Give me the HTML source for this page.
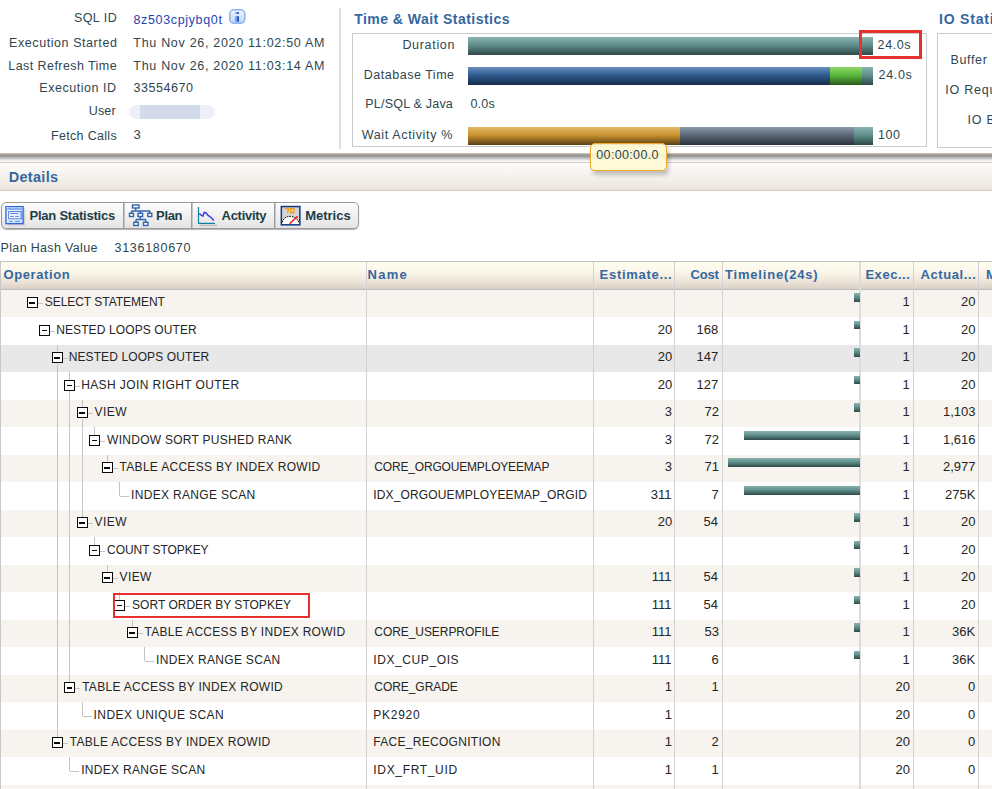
<!DOCTYPE html>
<html><head><meta charset="utf-8"><style>
html,body{margin:0;padding:0;width:992px;height:789px;overflow:hidden;background:#fff;}
body{position:relative;font-family:"Liberation Sans",sans-serif;}
.t{position:absolute;white-space:nowrap;}
.b{position:absolute;}
</style></head><body>
<div class="t" style="left:73.90px;top:11.00px;font-size:12.5px;line-height:15.00px;color:#2e464f;letter-spacing:0.460px;">SQL ID</div>
<div class="t" style="left:9.10px;top:36.00px;font-size:12.5px;line-height:15.00px;color:#2e464f;letter-spacing:0.569px;">Execution Started</div>
<div class="t" style="left:8.30px;top:59.00px;font-size:12.5px;line-height:15.00px;color:#2e464f;letter-spacing:0.431px;">Last Refresh Time</div>
<div class="t" style="left:39.30px;top:81.00px;font-size:12.5px;line-height:15.00px;color:#2e464f;letter-spacing:0.536px;">Execution ID</div>
<div class="t" style="left:88.70px;top:104.00px;font-size:12.5px;line-height:15.00px;color:#2e464f;letter-spacing:0.167px;">User</div>
<div class="t" style="left:51.00px;top:129.00px;font-size:12.5px;line-height:15.00px;color:#2e464f;letter-spacing:0.320px;">Fetch Calls</div>
<div class="t" style="left:133.40px;top:13.00px;font-size:12.5px;line-height:15.00px;color:#2444b4;letter-spacing:0.658px;">8z503cpjybq0t</div>
<div class="t" style="left:133.30px;top:36.00px;font-size:12.5px;line-height:15.00px;color:#2e464f;letter-spacing:0.704px;">Thu Nov 26, 2020 11:02:50 AM</div>
<div class="t" style="left:133.30px;top:59.00px;font-size:12.5px;line-height:15.00px;color:#2e464f;letter-spacing:0.704px;">Thu Nov 26, 2020 11:03:14 AM</div>
<div class="t" style="left:133.50px;top:81.00px;font-size:12.5px;line-height:15.00px;color:#2e464f;letter-spacing:0.557px;">33554670</div>
<div class="t" style="left:133.50px;top:127.00px;font-size:13px;line-height:15.60px;color:#2e464f;">3</div>
<svg class="b" style="left:229px;top:9px" width="17" height="15" viewBox="0 0 17 15">
<defs><linearGradient id="ig" x1="0" y1="0" x2="0" y2="1"><stop offset="0" stop-color="#f2f7ff"/><stop offset="1" stop-color="#bcd4f6"/></linearGradient></defs>
<rect x="0.75" y="0.75" width="15" height="13.5" rx="4" fill="url(#ig)" stroke="#8eb2ee" stroke-width="1.5"/>
<rect x="6.1" y="3.1" width="2" height="1.8" fill="#6f9ef2"/><rect x="8.1" y="3.1" width="1.9" height="1.8" fill="#2a52b4"/><rect x="6.1" y="7.2" width="2" height="5.6" fill="#6f9ef2"/><rect x="8.1" y="7.2" width="1.9" height="5.6" fill="#2a52b4"/>
</svg>
<div class="b" style="left:129px;top:105px;width:86px;height:14px;border-radius:7px;background:#eef0f7;filter:blur(0.6px)"></div>
<div class="b" style="left:140px;top:105px;width:60px;height:14px;background:#d3dbeb;filter:blur(0.5px)"></div>
<div class="b" style="left:339px;top:8px;width:2px;height:141px;background:#dde0e0"></div>
<div class="t" style="left:354.20px;top:11.00px;font-size:14px;line-height:16.80px;color:#35689f;font-weight:bold;letter-spacing:0.467px;">Time &amp; Wait Statistics</div>
<div class="b" style="left:352px;top:33px;width:575px;height:114px;border:1px solid #c9cccc;box-sizing:border-box;"></div>
<div class="b" style="left:468px;top:37px;width:405px;height:18px;background:linear-gradient(to bottom,#8ab3b0 0%,#5f8f8c 45%,#2e4846 100%)"></div>
<div class="b" style="left:468px;top:67px;width:362px;height:18px;background:linear-gradient(to bottom,#6b8fbf 0%,#2f5a8f 45%,#172c48 100%)"></div>
<div class="b" style="left:830px;top:67px;width:32px;height:18px;background:linear-gradient(to bottom,#8ed86a 0%,#58b83a 45%,#2d5a1e 100%)"></div>
<div class="b" style="left:862px;top:67px;width:11px;height:18px;background:linear-gradient(to bottom,#8ab3b0 0%,#5f8f8c 45%,#2e4846 100%)"></div>
<div class="b" style="left:468px;top:127px;width:212px;height:18px;background:linear-gradient(to bottom,#e2b866 0%,#c9922e 45%,#5a4018 100%)"></div>
<div class="b" style="left:680px;top:127px;width:174px;height:18px;background:linear-gradient(to bottom,#8a98a8 0%,#5c6878 45%,#2c323c 100%)"></div>
<div class="b" style="left:854px;top:127px;width:19px;height:18px;background:linear-gradient(to bottom,#8ab3b0 0%,#5f8f8c 45%,#2e4846 100%)"></div>
<div class="t" style="left:402.40px;top:38.00px;font-size:12.5px;line-height:15.00px;color:#2e464f;letter-spacing:0.686px;">Duration</div>
<div class="t" style="left:363.70px;top:68.00px;font-size:12.5px;line-height:15.00px;color:#2e464f;letter-spacing:0.525px;">Database Time</div>
<div class="t" style="left:365.30px;top:97.00px;font-size:12.5px;line-height:15.00px;color:#2e464f;letter-spacing:0.208px;">PL/SQL &amp; Java</div>
<div class="t" style="left:361.70px;top:128.00px;font-size:12.5px;line-height:15.00px;color:#2e464f;letter-spacing:0.650px;">Wait Activity %</div>
<div class="t" style="left:470.50px;top:97.00px;font-size:12.5px;line-height:15.00px;color:#2e464f;letter-spacing:0.167px;">0.0s</div>
<div class="t" style="left:877.60px;top:38.00px;font-size:12.5px;line-height:15.00px;color:#2e464f;letter-spacing:0.600px;">24.0s</div>
<div class="t" style="left:878.60px;top:68.00px;font-size:12.5px;line-height:15.00px;color:#2e464f;letter-spacing:0.650px;">24.0s</div>
<div class="t" style="left:878.00px;top:128.00px;font-size:12.5px;line-height:15.00px;color:#2e464f;letter-spacing:0.550px;">100</div>
<div class="b" style="left:859px;top:30px;width:63px;height:29px;border:3px solid #e8312f;box-sizing:border-box"></div>
<div class="t" style="left:939.00px;top:11.00px;font-size:14px;line-height:16.80px;color:#35689f;font-weight:bold;letter-spacing:0.802px;">IO Statistics</div>
<div class="b" style="left:937px;top:33px;width:80px;height:115px;border:1px solid #c9cccc;box-sizing:border-box;"></div>
<div class="t" style="left:950.40px;top:53.00px;font-size:12.5px;line-height:15.00px;color:#2e464f;letter-spacing:0.665px;">Buffer Gets</div>
<div class="t" style="left:945.20px;top:83.00px;font-size:12.5px;line-height:15.00px;color:#2e464f;letter-spacing:0.772px;">IO Requests</div>
<div class="t" style="left:967.50px;top:113.00px;font-size:12.5px;line-height:15.00px;color:#2e464f;letter-spacing:0.748px;">IO Bytes</div>
<div class="b" style="left:0px;top:153px;width:992px;height:9px;background:linear-gradient(to bottom,#dccfc2 0px,#b5aea8 1px,#959595 2px,#959595 3px,#aaaaaa 4px,#cfcfcf 6px,#e9e9e9 7px,#f4f4f4 8px,#ffffff 9px)"></div>
<div class="b" style="left:0px;top:162px;width:992px;height:29px;border-top:1px solid #d8cabb;border-bottom:1px solid #d8cabb;box-sizing:border-box;background:linear-gradient(to bottom,#fefdfb,#ebe5de)"></div>
<div class="t" style="left:8.70px;top:169.00px;font-size:14.5px;line-height:17.40px;color:#35689f;font-weight:bold;letter-spacing:0.300px;">Details</div>
<div class="b" style="left:590px;top:143px;width:77px;height:28px;box-sizing:border-box;border:1.5px solid #f0a828;border-radius:5px;background:rgba(255,251,212,0.9);box-shadow:2px 4px 4px rgba(0,0,0,0.22)"></div>
<div class="t" style="left:596.30px;top:148.00px;font-size:12.5px;line-height:15.00px;color:#2e464f;letter-spacing:0.344px;">00:00:00.0</div>
<div class="b" style="left:1px;top:202px;width:358px;height:27px;box-sizing:border-box;border:1px solid #9a9a9a;border-radius:5px;background:linear-gradient(to bottom,#fdfdfd,#e4e4e4);box-shadow:0 1px 1px rgba(0,0,0,0.3)"></div>
<div class="b" style="left:123px;top:203px;width:2px;height:25px;background:linear-gradient(to right,#8a8a8a,#d8d8d8)"></div>
<div class="b" style="left:191px;top:203px;width:2px;height:25px;background:linear-gradient(to right,#8a8a8a,#d8d8d8)"></div>
<div class="b" style="left:274px;top:203px;width:2px;height:25px;background:linear-gradient(to right,#8a8a8a,#d8d8d8)"></div>
<div class="t" style="left:29.50px;top:208.00px;font-size:13px;line-height:15.60px;color:#1d3d47;font-weight:bold;letter-spacing:-0.229px;">Plan Statistics</div>
<div class="t" style="left:156.10px;top:208.00px;font-size:13px;line-height:15.60px;color:#1d3d47;font-weight:bold;letter-spacing:-0.333px;">Plan</div>
<div class="t" style="left:221.60px;top:208.00px;font-size:13px;line-height:15.60px;color:#1d3d47;font-weight:bold;letter-spacing:-0.300px;">Activity</div>
<div class="t" style="left:305.30px;top:208.00px;font-size:13px;line-height:15.60px;color:#1d3d47;font-weight:bold;letter-spacing:-0.033px;">Metrics</div>
<svg class="b" style="left:2px;top:202px" width="26" height="26" viewBox="0 0 26 26">
<defs><linearGradient id="psg" x1="0" y1="0" x2="1" y2="1"><stop offset="0" stop-color="#f4faff"/><stop offset="1" stop-color="#c9e2ff"/></linearGradient></defs>
<rect x="5.6" y="6" width="17.6" height="17.6" fill="#b8b0a8" opacity="0.45"/>
<rect x="3.95" y="4.65" width="17.15" height="17" fill="url(#psg)" stroke="#2f62e0" stroke-width="1.3"/>
<rect x="4.6" y="5.3" width="15.8" height="1.8" fill="#a8d0ff"/>
<rect x="5" y="5.5" width="1.2" height="1" fill="#ffffff"/>
<path d="M4.6 7.1H20.4" stroke="#3a6ae0" stroke-width="0.8"/>
<rect x="6.6" y="9.5" width="13.2" height="7.3" fill="#eef6ff" stroke="#5a86e0" stroke-width="1"/>
<rect x="18.3" y="10" width="1.2" height="6.3" fill="#7a9ee8"/>
<path d="M8.2 11.5H16.7M8.2 14.4H11.9M13.1 14.4H16.9M7.1 19.4H10.8M13.1 19.4H17.8" stroke="#4a78d8" stroke-width="0.9"/>
</svg>
<svg class="b" style="left:128px;top:204px" width="25" height="23" viewBox="0 0 25 23">
<g fill="#ffffff" stroke="#2f63ad" stroke-width="1.4">
<rect x="4.5" y="1" width="6.5" height="3"/>
<rect x="1.5" y="9.3" width="4" height="3.2"/><rect x="10" y="9.3" width="4.6" height="3.2"/><rect x="19.8" y="9.3" width="4" height="3.2"/>
<rect x="5.8" y="18.3" width="4.4" height="3.2"/><rect x="15.5" y="18.3" width="4.4" height="3.2"/>
</g>
<path d="M7.7 4v3M3.5 7v2.3M3.5 7h18.2v2.3M12.3 7v2.3M12.3 12.5v3M8 15.5h9.7M8 15.5v2.8M17.7 15.5v2.8" stroke="#2f63ad" stroke-width="1.4" fill="none"/>
</svg>
<svg class="b" style="left:194px;top:203px" width="26" height="26" viewBox="0 0 26 26">
<path d="M5.5 22.3H23" stroke="#9a9590" stroke-width="1.2" opacity="0.6"/>
<path d="M4.5 4V20.4H21" stroke="#137fa8" stroke-width="1.2" fill="none"/>
<path d="M5.3 10.5L6.9 11.9L8.9 13.2L10.2 9.4L12.2 9.9L13.8 12.2L17.1 14.5L19.8 17.5" stroke="#3c3ce6" stroke-width="1.5" fill="none"/>
</svg>
<svg class="b" style="left:277px;top:202px" width="26" height="26" viewBox="0 0 26 26">
<rect x="4.35" y="4.55" width="18.5" height="18.3" fill="#d4d4d4" stroke="#0b3a88" stroke-width="1.5"/>
<path d="M5.3 21.9V20.4C6 16.4 9 14.4 13 14.4C17 14.4 20.5 16.4 21.9 20.4V21.9Z" fill="#ffffff"/>
<path d="M5.3 20.4C6 16.4 9 14.4 13 14.4C17 14.4 20.5 16.4 21.9 20.4" fill="none" stroke="#111" stroke-width="1" stroke-dasharray="1.6 0.9"/>
<path d="M12.5 21.8L20.6 14.4" stroke="#f01818" stroke-width="1.5"/>
<path d="M7.8 6.5H11.6L10.6 10.9" stroke="#f59a10" stroke-width="1.3" fill="none"/>
<rect x="13.6" y="6.5" width="3.3" height="4.2" stroke="#f59a10" stroke-width="1.3" fill="none"/>
</svg>
<div class="t" style="left:0.60px;top:241.00px;font-size:12.5px;line-height:15.00px;color:#2e464f;letter-spacing:0.329px;">Plan Hash Value</div>
<div class="t" style="left:114.50px;top:241.00px;font-size:12.5px;line-height:15.00px;color:#2e464f;letter-spacing:0.711px;">3136180670</div>
<div class="b" style="left:1px;top:261px;width:991px;height:29px;border-top:1px solid #bfc4c8;border-bottom:1px solid #b9bec3;box-sizing:border-box;background:linear-gradient(to bottom,#fefbf0 0%,#fcf7eb 35%,#ede5da 70%,#dcd0c4 100%)"></div>
<div class="b" style="left:1px;top:289.5px;width:991px;height:27.5px;background:#f7f4ef"></div>
<div class="b" style="left:1px;top:317.0px;width:991px;height:27.5px;background:#ffffff"></div>
<div class="b" style="left:1px;top:344.5px;width:991px;height:27.5px;background:#e8e8e8"></div>
<div class="b" style="left:1px;top:372.0px;width:991px;height:27.5px;background:#ffffff"></div>
<div class="b" style="left:1px;top:399.5px;width:991px;height:27.5px;background:#f7f4ef"></div>
<div class="b" style="left:1px;top:427.0px;width:991px;height:27.5px;background:#ffffff"></div>
<div class="b" style="left:1px;top:454.5px;width:991px;height:27.5px;background:#f7f4ef"></div>
<div class="b" style="left:1px;top:482.0px;width:991px;height:27.5px;background:#ffffff"></div>
<div class="b" style="left:1px;top:509.5px;width:991px;height:27.5px;background:#f7f4ef"></div>
<div class="b" style="left:1px;top:537.0px;width:991px;height:27.5px;background:#ffffff"></div>
<div class="b" style="left:1px;top:564.5px;width:991px;height:27.5px;background:#f7f4ef"></div>
<div class="b" style="left:1px;top:592.0px;width:991px;height:27.5px;background:#ffffff"></div>
<div class="b" style="left:1px;top:619.5px;width:991px;height:27.5px;background:#f7f4ef"></div>
<div class="b" style="left:1px;top:647.0px;width:991px;height:27.5px;background:#ffffff"></div>
<div class="b" style="left:1px;top:674.5px;width:991px;height:27.5px;background:#f7f4ef"></div>
<div class="b" style="left:1px;top:702.0px;width:991px;height:27.5px;background:#ffffff"></div>
<div class="b" style="left:1px;top:729.5px;width:991px;height:27.5px;background:#f7f4ef"></div>
<div class="b" style="left:1px;top:757.0px;width:991px;height:27.5px;background:#ffffff"></div>
<div class="b" style="left:1px;top:784.5px;width:991px;height:27.5px;background:#f7f4ef"></div>
<div class="b" style="left:366px;top:262px;width:1px;height:527px;background:#d2d2d2"></div>
<div class="b" style="left:593px;top:262px;width:1px;height:527px;background:#d2d2d2"></div>
<div class="b" style="left:674px;top:262px;width:1px;height:527px;background:#d2d2d2"></div>
<div class="b" style="left:722px;top:262px;width:1px;height:527px;background:#d2d2d2"></div>
<div class="b" style="left:913px;top:262px;width:1px;height:527px;background:#d2d2d2"></div>
<div class="b" style="left:978px;top:262px;width:1px;height:527px;background:#d2d2d2"></div>
<div class="b" style="left:859px;top:262px;width:2px;height:527px;background:#dcdcdc"></div>
<div class="b" style="left:0px;top:261px;width:1px;height:528px;background:#c8c8c8"></div>
<div class="t" style="left:3.60px;top:267.00px;font-size:13px;line-height:15.60px;color:#35689f;font-weight:bold;letter-spacing:0.575px;">Operation</div>
<div class="t" style="left:367.60px;top:267.00px;font-size:13px;line-height:15.60px;color:#35689f;font-weight:bold;letter-spacing:1.233px;">Name</div>
<div class="t" style="left:599.60px;top:267.00px;font-size:13px;line-height:15.60px;color:#35689f;font-weight:bold;letter-spacing:0.700px;">Estimate...</div>
<div class="t" style="left:690.50px;top:267.00px;font-size:13px;line-height:15.60px;color:#35689f;font-weight:bold;letter-spacing:-0.167px;">Cost</div>
<div class="t" style="left:725.00px;top:267.00px;font-size:13px;line-height:15.60px;color:#35689f;font-weight:bold;letter-spacing:0.817px;">Timeline(24s)</div>
<div class="t" style="left:865.40px;top:267.00px;font-size:13px;line-height:15.60px;color:#35689f;font-weight:bold;letter-spacing:0.550px;">Exec...</div>
<div class="t" style="left:920.40px;top:267.00px;font-size:13px;line-height:15.60px;color:#35689f;font-weight:bold;letter-spacing:0.600px;">Actual...</div>
<div class="t" style="left:986.00px;top:267.00px;font-size:13px;line-height:15.60px;color:#35689f;font-weight:bold;">Mem</div>
<div class="b" style="left:57px;top:344.5px;width:1px;height:8px;background:#c4c4c4"></div>
<div class="b" style="left:57px;top:363.5px;width:1px;height:366.0px;background:#c4c4c4"></div>
<div class="b" style="left:69px;top:372.0px;width:1px;height:8px;background:#c4c4c4"></div>
<div class="b" style="left:69px;top:391.0px;width:1px;height:283.5px;background:#c4c4c4"></div>
<div class="b" style="left:82px;top:399.5px;width:1px;height:8px;background:#c4c4c4"></div>
<div class="b" style="left:82px;top:418.5px;width:1px;height:91.0px;background:#c4c4c4"></div>
<div class="b" style="left:94px;top:427.0px;width:1px;height:8px;background:#c4c4c4"></div>
<div class="b" style="left:107px;top:454.5px;width:1px;height:8px;background:#c4c4c4"></div>
<div class="b" style="left:119px;top:482.0px;width:1px;height:14px;background:#c4c4c4"></div>
<div class="b" style="left:82px;top:509.5px;width:1px;height:8px;background:#c4c4c4"></div>
<div class="b" style="left:94px;top:537.0px;width:1px;height:8px;background:#c4c4c4"></div>
<div class="b" style="left:107px;top:564.5px;width:1px;height:8px;background:#c4c4c4"></div>
<div class="b" style="left:119px;top:592.0px;width:1px;height:8px;background:#c4c4c4"></div>
<div class="b" style="left:132px;top:619.5px;width:1px;height:8px;background:#c4c4c4"></div>
<div class="b" style="left:144px;top:647.0px;width:1px;height:14px;background:#c4c4c4"></div>
<div class="b" style="left:69px;top:674.5px;width:1px;height:8px;background:#c4c4c4"></div>
<div class="b" style="left:82px;top:702.0px;width:1px;height:14px;background:#c4c4c4"></div>
<div class="b" style="left:57px;top:729.5px;width:1px;height:8px;background:#c4c4c4"></div>
<div class="b" style="left:69px;top:757.0px;width:1px;height:14px;background:#c4c4c4"></div>
<div class="b" style="left:26.8px;top:297.3px;width:11.2px;height:11.2px;box-sizing:border-box;border:1.6px solid #0a0a0a;background:#fff"></div>
<div class="b" style="left:29.3px;top:302.1px;width:5.6px;height:1.8px;background:#0a0a0a"></div>
<div class="b" style="left:38px;top:303.0px;width:5px;height:1px;background:#c4c4c4"></div>
<div class="t" style="left:44.69px;top:295.00px;font-size:12px;line-height:14.40px;color:#252525;letter-spacing:-0.033px;">SELECT STATEMENT</div>
<div class="t" style="left:902.60px;top:294.00px;font-size:13px;line-height:15.60px;color:#252525;">1</div>
<div class="t" style="left:961.00px;top:294.00px;font-size:13px;line-height:15.60px;color:#252525;">20</div>
<div class="b" style="left:854.3px;top:293.3px;width:5.5px;height:8.7px;background:linear-gradient(to bottom,#8ab3b0 0%,#5f8f8c 45%,#2e4846 100%)"></div>
<div class="b" style="left:39.3px;top:324.8px;width:11.2px;height:11.2px;box-sizing:border-box;border:1.2px solid #0a0a0a;background:#fff"></div>
<div class="b" style="left:41.8px;top:329.6px;width:5.6px;height:1.4px;background:#0a0a0a"></div>
<div class="b" style="left:50px;top:330.5px;width:5px;height:1px;background:#c4c4c4"></div>
<div class="t" style="left:56.17px;top:323.00px;font-size:12px;line-height:14.40px;color:#252525;letter-spacing:0.112px;">NESTED LOOPS OUTER</div>
<div class="t" style="left:657.80px;top:322.00px;font-size:13px;line-height:15.60px;color:#252525;">20</div>
<div class="t" style="left:696.50px;top:322.00px;font-size:13px;line-height:15.60px;color:#252525;">168</div>
<div class="t" style="left:902.60px;top:322.00px;font-size:13px;line-height:15.60px;color:#252525;">1</div>
<div class="t" style="left:961.00px;top:322.00px;font-size:13px;line-height:15.60px;color:#252525;">20</div>
<div class="b" style="left:854.3px;top:320.8px;width:5.5px;height:8.7px;background:linear-gradient(to bottom,#8ab3b0 0%,#5f8f8c 45%,#2e4846 100%)"></div>
<div class="b" style="left:51.8px;top:352.3px;width:11.2px;height:11.2px;box-sizing:border-box;border:1.6px solid #0a0a0a;background:#fff"></div>
<div class="b" style="left:54.2px;top:357.1px;width:5.6px;height:1.8px;background:#0a0a0a"></div>
<div class="b" style="left:63px;top:358.0px;width:5px;height:1px;background:#c4c4c4"></div>
<div class="t" style="left:68.65px;top:350.00px;font-size:12px;line-height:14.40px;color:#252525;letter-spacing:0.112px;">NESTED LOOPS OUTER</div>
<div class="t" style="left:657.80px;top:349.00px;font-size:13px;line-height:15.60px;color:#252525;">20</div>
<div class="t" style="left:696.50px;top:349.00px;font-size:13px;line-height:15.60px;color:#252525;">147</div>
<div class="t" style="left:902.60px;top:349.00px;font-size:13px;line-height:15.60px;color:#252525;">1</div>
<div class="t" style="left:961.00px;top:349.00px;font-size:13px;line-height:15.60px;color:#252525;">20</div>
<div class="b" style="left:854.3px;top:348.3px;width:5.5px;height:8.7px;background:linear-gradient(to bottom,#8ab3b0 0%,#5f8f8c 45%,#2e4846 100%)"></div>
<div class="b" style="left:64.2px;top:379.8px;width:11.2px;height:11.2px;box-sizing:border-box;border:1.2px solid #0a0a0a;background:#fff"></div>
<div class="b" style="left:66.7px;top:384.6px;width:5.6px;height:1.4px;background:#0a0a0a"></div>
<div class="b" style="left:75px;top:385.5px;width:5px;height:1px;background:#c4c4c4"></div>
<div class="t" style="left:81.13px;top:378.00px;font-size:12px;line-height:14.40px;color:#252525;letter-spacing:0.410px;">HASH JOIN RIGHT OUTER</div>
<div class="t" style="left:657.80px;top:377.00px;font-size:13px;line-height:15.60px;color:#252525;">20</div>
<div class="t" style="left:696.50px;top:377.00px;font-size:13px;line-height:15.60px;color:#252525;">127</div>
<div class="t" style="left:902.60px;top:377.00px;font-size:13px;line-height:15.60px;color:#252525;">1</div>
<div class="t" style="left:961.00px;top:377.00px;font-size:13px;line-height:15.60px;color:#252525;">20</div>
<div class="b" style="left:854.3px;top:375.8px;width:5.5px;height:8.7px;background:linear-gradient(to bottom,#8ab3b0 0%,#5f8f8c 45%,#2e4846 100%)"></div>
<div class="b" style="left:76.7px;top:407.3px;width:11.2px;height:11.2px;box-sizing:border-box;border:1.6px solid #0a0a0a;background:#fff"></div>
<div class="b" style="left:79.2px;top:412.1px;width:5.6px;height:1.8px;background:#0a0a0a"></div>
<div class="b" style="left:88px;top:413.0px;width:5px;height:1px;background:#c4c4c4"></div>
<div class="t" style="left:94.61px;top:405.00px;font-size:12px;line-height:14.40px;color:#252525;letter-spacing:0.400px;">VIEW</div>
<div class="t" style="left:664.80px;top:404.00px;font-size:13px;line-height:15.60px;color:#252525;">3</div>
<div class="t" style="left:704.50px;top:404.00px;font-size:13px;line-height:15.60px;color:#252525;">72</div>
<div class="t" style="left:902.60px;top:404.00px;font-size:13px;line-height:15.60px;color:#252525;">1</div>
<div class="t" style="left:943.00px;top:404.00px;font-size:13px;line-height:15.60px;color:#252525;">1,103</div>
<div class="b" style="left:854.3px;top:403.3px;width:5.5px;height:8.7px;background:linear-gradient(to bottom,#8ab3b0 0%,#5f8f8c 45%,#2e4846 100%)"></div>
<div class="b" style="left:89.2px;top:434.8px;width:11.2px;height:11.2px;box-sizing:border-box;border:1.2px solid #0a0a0a;background:#fff"></div>
<div class="b" style="left:91.7px;top:439.6px;width:5.6px;height:1.4px;background:#0a0a0a"></div>
<div class="b" style="left:100px;top:440.5px;width:5px;height:1px;background:#c4c4c4"></div>
<div class="t" style="left:107.09px;top:433.00px;font-size:12px;line-height:14.40px;color:#252525;letter-spacing:0.268px;">WINDOW SORT PUSHED RANK</div>
<div class="t" style="left:664.80px;top:432.00px;font-size:13px;line-height:15.60px;color:#252525;">3</div>
<div class="t" style="left:704.50px;top:432.00px;font-size:13px;line-height:15.60px;color:#252525;">72</div>
<div class="t" style="left:902.60px;top:432.00px;font-size:13px;line-height:15.60px;color:#252525;">1</div>
<div class="t" style="left:943.00px;top:432.00px;font-size:13px;line-height:15.60px;color:#252525;">1,616</div>
<div class="b" style="left:744px;top:430.7px;width:115.5px;height:8.9px;background:linear-gradient(to bottom,#8ab3b0 0%,#5f8f8c 45%,#2e4846 100%)"></div>
<div class="b" style="left:101.7px;top:462.3px;width:11.2px;height:11.2px;box-sizing:border-box;border:1.6px solid #0a0a0a;background:#fff"></div>
<div class="b" style="left:104.2px;top:467.1px;width:5.6px;height:1.8px;background:#0a0a0a"></div>
<div class="b" style="left:113px;top:468.0px;width:5px;height:1px;background:#c4c4c4"></div>
<div class="t" style="left:119.57px;top:460.00px;font-size:12px;line-height:14.40px;color:#252525;letter-spacing:0.296px;">TABLE ACCESS BY INDEX ROWID</div>
<div class="t" style="left:374.30px;top:460.00px;font-size:12px;line-height:14.40px;color:#252525;letter-spacing:-0.180px;">CORE_ORGOUEMPLOYEEMAP</div>
<div class="t" style="left:664.80px;top:459.00px;font-size:13px;line-height:15.60px;color:#252525;">3</div>
<div class="t" style="left:704.50px;top:459.00px;font-size:13px;line-height:15.60px;color:#252525;">71</div>
<div class="t" style="left:902.60px;top:459.00px;font-size:13px;line-height:15.60px;color:#252525;">1</div>
<div class="t" style="left:943.00px;top:459.00px;font-size:13px;line-height:15.60px;color:#252525;">2,977</div>
<div class="b" style="left:728px;top:458.2px;width:131.5px;height:8.9px;background:linear-gradient(to bottom,#8ab3b0 0%,#5f8f8c 45%,#2e4846 100%)"></div>
<div class="b" style="left:120px;top:495.5px;width:9px;height:1px;background:#c4c4c4"></div>
<div class="t" style="left:131.05px;top:488.00px;font-size:12px;line-height:14.40px;color:#252525;letter-spacing:0.320px;">INDEX RANGE SCAN</div>
<div class="t" style="left:373.30px;top:488.00px;font-size:12px;line-height:14.40px;color:#252525;letter-spacing:0.140px;">IDX_ORGOUEMPLOYEEMAP_ORGID</div>
<div class="t" style="left:650.80px;top:487.00px;font-size:13px;line-height:15.60px;color:#252525;">311</div>
<div class="t" style="left:711.50px;top:487.00px;font-size:13px;line-height:15.60px;color:#252525;">7</div>
<div class="t" style="left:902.60px;top:487.00px;font-size:13px;line-height:15.60px;color:#252525;">1</div>
<div class="t" style="left:945.00px;top:487.00px;font-size:13px;line-height:15.60px;color:#252525;">275K</div>
<div class="b" style="left:744px;top:485.7px;width:115.5px;height:8.9px;background:linear-gradient(to bottom,#8ab3b0 0%,#5f8f8c 45%,#2e4846 100%)"></div>
<div class="b" style="left:76.7px;top:517.3px;width:11.2px;height:11.2px;box-sizing:border-box;border:1.6px solid #0a0a0a;background:#fff"></div>
<div class="b" style="left:79.2px;top:522.1px;width:5.6px;height:1.8px;background:#0a0a0a"></div>
<div class="b" style="left:88px;top:523.0px;width:5px;height:1px;background:#c4c4c4"></div>
<div class="t" style="left:94.61px;top:515.00px;font-size:12px;line-height:14.40px;color:#252525;letter-spacing:0.400px;">VIEW</div>
<div class="t" style="left:657.80px;top:514.00px;font-size:13px;line-height:15.60px;color:#252525;">20</div>
<div class="t" style="left:703.50px;top:514.00px;font-size:13px;line-height:15.60px;color:#252525;">54</div>
<div class="t" style="left:902.60px;top:514.00px;font-size:13px;line-height:15.60px;color:#252525;">1</div>
<div class="t" style="left:961.00px;top:514.00px;font-size:13px;line-height:15.60px;color:#252525;">20</div>
<div class="b" style="left:854.3px;top:513.3px;width:5.5px;height:8.7px;background:linear-gradient(to bottom,#8ab3b0 0%,#5f8f8c 45%,#2e4846 100%)"></div>
<div class="b" style="left:89.2px;top:544.8px;width:11.2px;height:11.2px;box-sizing:border-box;border:1.2px solid #0a0a0a;background:#fff"></div>
<div class="b" style="left:91.7px;top:549.6px;width:5.6px;height:1.4px;background:#0a0a0a"></div>
<div class="b" style="left:100px;top:550.5px;width:5px;height:1px;background:#c4c4c4"></div>
<div class="t" style="left:107.09px;top:543.00px;font-size:12px;line-height:14.40px;color:#252525;letter-spacing:-0.058px;">COUNT STOPKEY</div>
<div class="t" style="left:902.60px;top:542.00px;font-size:13px;line-height:15.60px;color:#252525;">1</div>
<div class="t" style="left:961.00px;top:542.00px;font-size:13px;line-height:15.60px;color:#252525;">20</div>
<div class="b" style="left:854.3px;top:540.8px;width:5.5px;height:8.7px;background:linear-gradient(to bottom,#8ab3b0 0%,#5f8f8c 45%,#2e4846 100%)"></div>
<div class="b" style="left:101.7px;top:572.3px;width:11.2px;height:11.2px;box-sizing:border-box;border:1.6px solid #0a0a0a;background:#fff"></div>
<div class="b" style="left:104.2px;top:577.1px;width:5.6px;height:1.8px;background:#0a0a0a"></div>
<div class="b" style="left:113px;top:578.0px;width:5px;height:1px;background:#c4c4c4"></div>
<div class="t" style="left:119.57px;top:570.00px;font-size:12px;line-height:14.40px;color:#252525;letter-spacing:0.400px;">VIEW</div>
<div class="t" style="left:651.80px;top:569.00px;font-size:13px;line-height:15.60px;color:#252525;">111</div>
<div class="t" style="left:703.50px;top:569.00px;font-size:13px;line-height:15.60px;color:#252525;">54</div>
<div class="t" style="left:902.60px;top:569.00px;font-size:13px;line-height:15.60px;color:#252525;">1</div>
<div class="t" style="left:961.00px;top:569.00px;font-size:13px;line-height:15.60px;color:#252525;">20</div>
<div class="b" style="left:854.3px;top:568.3px;width:5.5px;height:8.7px;background:linear-gradient(to bottom,#8ab3b0 0%,#5f8f8c 45%,#2e4846 100%)"></div>
<div class="b" style="left:114.2px;top:599.8px;width:11.2px;height:11.2px;box-sizing:border-box;border:1.2px solid #0a0a0a;background:#fff"></div>
<div class="b" style="left:116.7px;top:604.6px;width:5.6px;height:1.4px;background:#0a0a0a"></div>
<div class="b" style="left:125px;top:605.5px;width:5px;height:1px;background:#c4c4c4"></div>
<div class="t" style="left:132.05px;top:598.00px;font-size:12px;line-height:14.40px;color:#252525;letter-spacing:0.020px;">SORT ORDER BY STOPKEY</div>
<div class="t" style="left:651.80px;top:597.00px;font-size:13px;line-height:15.60px;color:#252525;">111</div>
<div class="t" style="left:703.50px;top:597.00px;font-size:13px;line-height:15.60px;color:#252525;">54</div>
<div class="t" style="left:902.60px;top:597.00px;font-size:13px;line-height:15.60px;color:#252525;">1</div>
<div class="t" style="left:961.00px;top:597.00px;font-size:13px;line-height:15.60px;color:#252525;">20</div>
<div class="b" style="left:854.3px;top:595.8px;width:5.5px;height:8.7px;background:linear-gradient(to bottom,#8ab3b0 0%,#5f8f8c 45%,#2e4846 100%)"></div>
<div class="b" style="left:126.6px;top:627.3px;width:11.2px;height:11.2px;box-sizing:border-box;border:1.6px solid #0a0a0a;background:#fff"></div>
<div class="b" style="left:129.1px;top:632.1px;width:5.6px;height:1.8px;background:#0a0a0a"></div>
<div class="b" style="left:138px;top:633.0px;width:5px;height:1px;background:#c4c4c4"></div>
<div class="t" style="left:144.53px;top:625.00px;font-size:12px;line-height:14.40px;color:#252525;letter-spacing:0.296px;">TABLE ACCESS BY INDEX ROWID</div>
<div class="t" style="left:374.30px;top:625.00px;font-size:12px;line-height:14.40px;color:#252525;letter-spacing:-0.067px;">CORE_USERPROFILE</div>
<div class="t" style="left:651.80px;top:624.00px;font-size:13px;line-height:15.60px;color:#252525;">111</div>
<div class="t" style="left:704.50px;top:624.00px;font-size:13px;line-height:15.60px;color:#252525;">53</div>
<div class="t" style="left:902.60px;top:624.00px;font-size:13px;line-height:15.60px;color:#252525;">1</div>
<div class="t" style="left:952.00px;top:624.00px;font-size:13px;line-height:15.60px;color:#252525;">36K</div>
<div class="b" style="left:854.3px;top:623.3px;width:5.5px;height:8.7px;background:linear-gradient(to bottom,#8ab3b0 0%,#5f8f8c 45%,#2e4846 100%)"></div>
<div class="b" style="left:145px;top:660.5px;width:9px;height:1px;background:#c4c4c4"></div>
<div class="t" style="left:156.01px;top:653.00px;font-size:12px;line-height:14.40px;color:#252525;letter-spacing:0.320px;">INDEX RANGE SCAN</div>
<div class="t" style="left:373.30px;top:653.00px;font-size:12px;line-height:14.40px;color:#252525;letter-spacing:0.590px;">IDX_CUP_OIS</div>
<div class="t" style="left:651.80px;top:652.00px;font-size:13px;line-height:15.60px;color:#252525;">111</div>
<div class="t" style="left:711.50px;top:652.00px;font-size:13px;line-height:15.60px;color:#252525;">6</div>
<div class="t" style="left:902.60px;top:652.00px;font-size:13px;line-height:15.60px;color:#252525;">1</div>
<div class="t" style="left:952.00px;top:652.00px;font-size:13px;line-height:15.60px;color:#252525;">36K</div>
<div class="b" style="left:854.3px;top:650.8px;width:5.5px;height:8.7px;background:linear-gradient(to bottom,#8ab3b0 0%,#5f8f8c 45%,#2e4846 100%)"></div>
<div class="b" style="left:64.2px;top:682.3px;width:11.2px;height:11.2px;box-sizing:border-box;border:1.6px solid #0a0a0a;background:#fff"></div>
<div class="b" style="left:66.7px;top:687.1px;width:5.6px;height:1.8px;background:#0a0a0a"></div>
<div class="b" style="left:75px;top:688.0px;width:5px;height:1px;background:#c4c4c4"></div>
<div class="t" style="left:82.13px;top:680.00px;font-size:12px;line-height:14.40px;color:#252525;letter-spacing:0.296px;">TABLE ACCESS BY INDEX ROWID</div>
<div class="t" style="left:374.30px;top:680.00px;font-size:12px;line-height:14.40px;color:#252525;letter-spacing:-0.056px;">CORE_GRADE</div>
<div class="t" style="left:664.80px;top:679.00px;font-size:13px;line-height:15.60px;color:#252525;">1</div>
<div class="t" style="left:711.50px;top:679.00px;font-size:13px;line-height:15.60px;color:#252525;">1</div>
<div class="t" style="left:895.60px;top:679.00px;font-size:13px;line-height:15.60px;color:#252525;">20</div>
<div class="t" style="left:968.00px;top:679.00px;font-size:13px;line-height:15.60px;color:#252525;">0</div>
<div class="b" style="left:83px;top:715.5px;width:9px;height:1px;background:#c4c4c4"></div>
<div class="t" style="left:93.61px;top:708.00px;font-size:12px;line-height:14.40px;color:#252525;letter-spacing:0.419px;">INDEX UNIQUE SCAN</div>
<div class="t" style="left:373.30px;top:708.00px;font-size:12px;line-height:14.40px;color:#252525;letter-spacing:0.720px;">PK2920</div>
<div class="t" style="left:664.80px;top:707.00px;font-size:13px;line-height:15.60px;color:#252525;">1</div>
<div class="t" style="left:895.60px;top:707.00px;font-size:13px;line-height:15.60px;color:#252525;">20</div>
<div class="t" style="left:968.00px;top:707.00px;font-size:13px;line-height:15.60px;color:#252525;">0</div>
<div class="b" style="left:51.8px;top:737.3px;width:11.2px;height:11.2px;box-sizing:border-box;border:1.6px solid #0a0a0a;background:#fff"></div>
<div class="b" style="left:54.2px;top:742.1px;width:5.6px;height:1.8px;background:#0a0a0a"></div>
<div class="b" style="left:63px;top:743.0px;width:5px;height:1px;background:#c4c4c4"></div>
<div class="t" style="left:69.65px;top:735.00px;font-size:12px;line-height:14.40px;color:#252525;letter-spacing:0.296px;">TABLE ACCESS BY INDEX ROWID</div>
<div class="t" style="left:373.30px;top:735.00px;font-size:12px;line-height:14.40px;color:#252525;letter-spacing:0.293px;">FACE_RECOGNITION</div>
<div class="t" style="left:664.80px;top:734.00px;font-size:13px;line-height:15.60px;color:#252525;">1</div>
<div class="t" style="left:711.50px;top:734.00px;font-size:13px;line-height:15.60px;color:#252525;">2</div>
<div class="t" style="left:895.60px;top:734.00px;font-size:13px;line-height:15.60px;color:#252525;">20</div>
<div class="t" style="left:968.00px;top:734.00px;font-size:13px;line-height:15.60px;color:#252525;">0</div>
<div class="b" style="left:70px;top:770.5px;width:9px;height:1px;background:#c4c4c4"></div>
<div class="t" style="left:81.13px;top:763.00px;font-size:12px;line-height:14.40px;color:#252525;letter-spacing:0.320px;">INDEX RANGE SCAN</div>
<div class="t" style="left:373.30px;top:763.00px;font-size:12px;line-height:14.40px;color:#252525;letter-spacing:0.670px;">IDX_FRT_UID</div>
<div class="t" style="left:664.80px;top:762.00px;font-size:13px;line-height:15.60px;color:#252525;">1</div>
<div class="t" style="left:711.50px;top:762.00px;font-size:13px;line-height:15.60px;color:#252525;">1</div>
<div class="t" style="left:895.60px;top:762.00px;font-size:13px;line-height:15.60px;color:#252525;">20</div>
<div class="t" style="left:968.00px;top:762.00px;font-size:13px;line-height:15.60px;color:#252525;">0</div>
<div class="b" style="left:113px;top:593px;width:197px;height:25px;border:2.5px solid #e8312f;box-sizing:border-box"></div>
</body></html>
